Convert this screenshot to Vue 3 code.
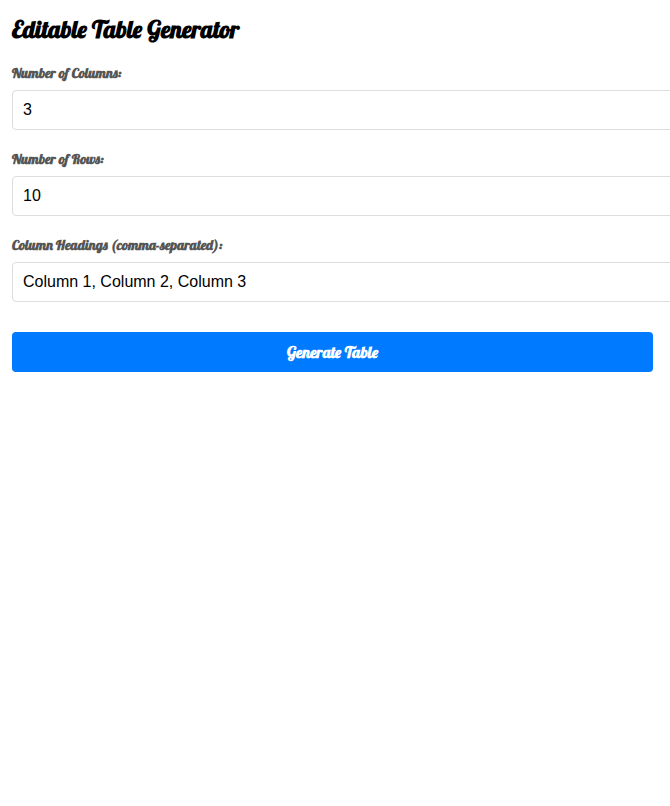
<script setup>
import { ref } from 'vue'
const columns = ref(3)
const rows = ref(10)
const headings = ref('Column 1, Column 2, Column 3')
</script>

<template>
  <main class="page">
    <h1 class="title">Editable Table Generator</h1>
    <form class="form" @submit.prevent>
      <label class="label" for="columns">Number of Columns:</label>
      <input id="columns" v-model="columns" class="input" type="text" />
      <label class="label" for="rows">Number of Rows:</label>
      <input id="rows" v-model="rows" class="input" type="text" />
      <label class="label" for="headings">Column Headings (comma-separated):</label>
      <input id="headings" v-model="headings" class="input" type="text" />
      <button class="button" type="submit">Generate Table</button>
    </form>
  </main>
</template>

<style>
body {
  background: #fff;
  overflow: hidden;
}
</style>

<style scoped>
.page {
  padding: 11px 17px 0 12px;
  font-family: Lobster, "Liberation Serif", serif;
  font-weight: bold;
}
.title {
  margin: 0;
  height: 36px;
  line-height: 36px;
  font-size: 24px;
  color: #000;
  white-space: nowrap;
}
.form {
  display: flex;
  flex-direction: column;
  padding-top: 17px;
}
.label {
  height: 18px;
  margin-bottom: 8px;
  line-height: 18px;
  font-size: 14px;
  color: #555;
  white-space: nowrap;
}
.input {
  box-sizing: border-box;
  width: calc(100% + 22px);
  height: 40px;
  margin: 0 0 20px;
  padding: 10px;
  border: 1px solid #ddd;
  border-radius: 4px;
  background: #fff;
  color: #000;
  font: 16px "Liberation Sans", Arial, sans-serif;
  outline: none;
}
.button {
  height: 40px;
  margin-top: 10px;
  padding: 0;
  border: 0;
  border-radius: 4px;
  background: #007bff;
  color: #fff;
  font: bold 16px Lobster, "Liberation Serif", serif;
}
</style>
